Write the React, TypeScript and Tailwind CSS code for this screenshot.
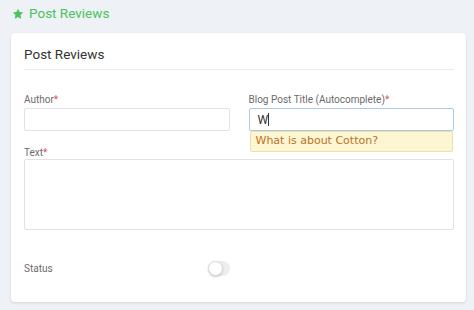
import React from 'react'

export default function App() {
  return (
    <div className="w-[474px] h-[310px] bg-[#eef1f5] overflow-hidden" style={{ fontFamily: 'Roboto, "Open Sans", sans-serif' }}>
      {/* Page header */}
      <div className="flex items-center gap-[5px] pl-[12px] pt-[3px] h-[24px] text-[#4cc35c] text-[13.5px]">
        <svg width="12" height="12" viewBox="0 0 24 24" fill="currentColor">
          <path d="M12 1.5l3.2 6.7 7.3.9-5.4 5.1 1.4 7.3L12 17.9l-6.5 3.6 1.4-7.3-5.4-5.1 7.3-.9z" />
        </svg>
        <span>Post Reviews</span>
      </div>

      {/* Card */}
      <div className="ml-[11px] mr-[8px] mt-[9px] h-[269px] bg-white rounded-[4px] shadow-[0_1px_3px_rgba(0,0,0,0.12)] pl-[13px] pr-[12px]">
        <div className="pt-[11px] pb-[5px] border-b border-[#ececec] text-[13.5px] leading-[20px] text-[#333]">
          Post Reviews
        </div>

        <div className="grid grid-cols-2 gap-x-[19px] mt-[23px]">
          <div>
            <label className="block text-[10px] leading-[14px] text-[#6b6b6b]">
              Author<span className="text-[#d9534f]">*</span>
            </label>
            <div className="mt-[1px] h-[23px] border border-[#e2e2e2] rounded-[2px]" />
          </div>
          <div className="relative">
            <label className="block text-[10px] leading-[14px] text-[#6b6b6b]">
              Blog Post Title (Autocomplete)<span className="text-[#d9534f]">*</span>
            </label>
            <div className="mt-[1px] h-[23px] border border-[#a9c9e6] rounded-[2px] flex items-center pl-[8px] text-[12px] text-[#333]">
              W<span className="w-px h-[13px] bg-[#333]" />
            </div>
            <div
              className="absolute left-[1px] right-[1px] top-[38px] h-[21px] bg-[#fdf6d3] border border-[#efe0a6] rounded-[2px] flex items-center pl-[5px] text-[11px] text-[#b8731f]"
              style={{ fontFamily: '"DejaVu Sans", Verdana, sans-serif' }}
            >
              What is about Cotton?
            </div>
          </div>
        </div>

        <div className="mt-[15px]">
          <label className="block text-[10px] leading-[13px] text-[#6b6b6b]">
            Text<span className="text-[#d9534f]">*</span>
          </label>
          <div className="h-[71px] border border-[#e2e2e2] rounded-[2px]" />
        </div>

        <div className="grid grid-cols-2 gap-x-[19px] mt-[30px]">
          <div className="flex items-center justify-between h-[16px]">
            <span className="text-[10px] text-[#6b6b6b]">Status</span>
            <div className="w-[22px] h-[15px] rounded-full bg-[#eeeeee] flex items-center">
              <div className="w-[15px] h-[15px] rounded-full bg-white border border-[#dcdcdc] shadow-[0_1px_2px_rgba(0,0,0,0.2)]" />
            </div>
          </div>
        </div>
      </div>
    </div>
  )
}
